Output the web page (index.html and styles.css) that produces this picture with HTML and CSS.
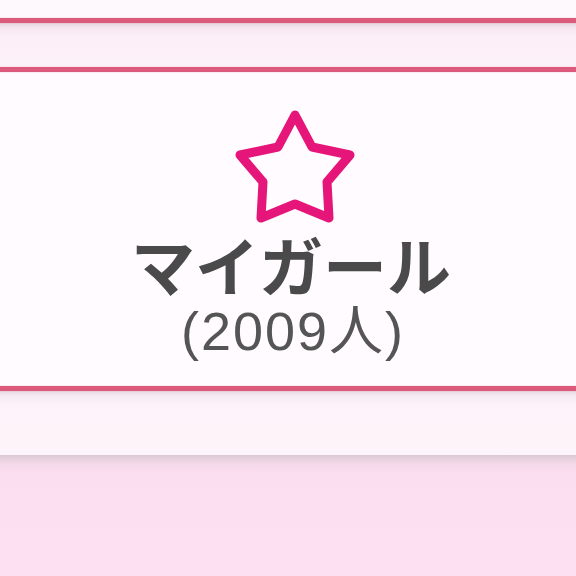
FILE: index.html
```html
<!DOCTYPE html>
<html lang="ja">
<head>
<meta charset="utf-8">
<link rel="stylesheet" href="styles.css">
</head>
<body>
<div class="page">
  <div class="top"></div>
  <div class="rule"></div>
  <div class="band band-top"></div>
  <div class="rule"></div>
  <div class="card">
    <svg class="star" viewBox="0 0 130 127" width="130" height="127" aria-hidden="true">
      <polygon points="65,10 82,42 120,50 97,77 99,113 65,99 31,113 33,77 10,50 48,42" fill="none" stroke="#e6157a" stroke-width="9" stroke-linejoin="round" stroke-linecap="round"/>
    </svg>
    <div class="title">マイガール</div>
    <div class="count">(2009人)</div>
  </div>
  <div class="rule"></div>
  <div class="band band-bottom"></div>
  <div class="bottom"></div>
</div>
</body>
</html>
```
FILE: styles.css
```css
html, body {
  margin: 0;
  padding: 0;
}
body {
  width: 576px;
  height: 576px;
  overflow: hidden;
  background: #fde0f3;
  font-family: "Liberation Sans", "Noto Sans CJK JP", sans-serif;
}
.page {
  display: flex;
  flex-direction: column;
  height: 576px;
}
.top {
  height: 18px;
  background: #fdf9fc;
}
.rule {
  height: 5px;
  background: #dc5a7b;
  box-shadow: 0 0 1px rgba(220, 90, 123, 0.5);
  position: relative;
  z-index: 1;
}
.band {
  background: linear-gradient(to bottom, #e6d6e0 0px, #f7e9f2 6px, #fdeff8 14px, #fdf1f9 100%);
}
.band-top {
  height: 44px;
}
.band-bottom {
  height: 64px;
  background: linear-gradient(to bottom, #e8dae3 0px, #f8ecf4 6px, #fdf2f9 14px, #fdf5fa 100%);
}
.card {
  height: 314px;
  background: #fffbfe;
  display: flex;
  flex-direction: column;
  align-items: center;
  padding: 33px 0 0 10px;
  box-sizing: border-box;
}
.star {
  display: block;
  margin-left: 4px;
}
.title {
  font-family: "Noto Sans CJK JP", sans-serif;
  font-weight: 700;
  font-size: 64px;
  line-height: 62px;
  color: #4a4a4a;
  margin-right: 4px;
}
.count {
  font-family: "Liberation Sans", "Noto Sans CJK JP", sans-serif;
  font-size: 54px;
  line-height: 56px;
  letter-spacing: 2px;
  color: #555555;
  margin-top: 9px;
}
.bottom {
  flex: 1;
  background: linear-gradient(to bottom, #dcc8d4 0px, #f2d8e8 8px, #fbdef0 18px, #fde1f3 100%);
}
```
